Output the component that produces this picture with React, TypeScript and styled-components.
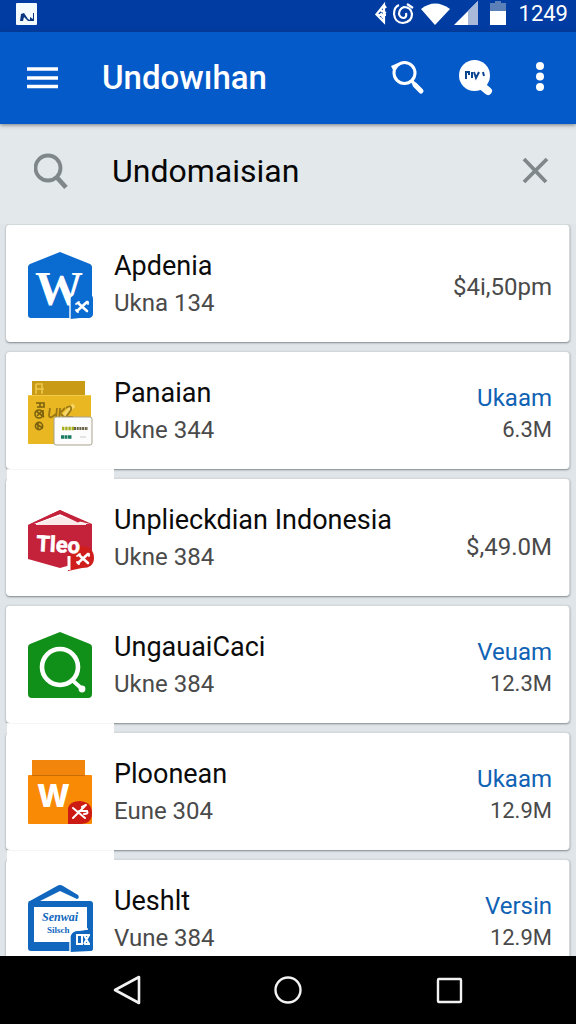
import React, { useState } from 'react';
import styled, { createGlobalStyle } from 'styled-components';

const GlobalStyle = createGlobalStyle`
  * { box-sizing: border-box; }
  body { margin: 0; background: #e1e7ea; font-family: Roboto, "Liberation Sans", sans-serif; }
  button, input { font: inherit; color: inherit; border: 0; padding: 0; margin: 0; background: none; }
  button { cursor: pointer; }
  svg { display: block; }
`;

const Screen = styled.div`
  display: flex;
  flex-direction: column;
  height: 100vh;
  overflow: hidden;
`;

const StatusBar = styled.div`
  flex: none;
  display: flex;
  align-items: center;
  justify-content: space-between;
  height: 32px;
  padding: 0 8px 4px 16px;
  background: #003ca2;
  color: #fff;
`;

const StatusIcons = styled.div`
  display: flex;
  align-items: center;
`;

const Clock = styled.span`
  margin-left: 12px;
  font-size: 22px;
  line-height: 28px;
`;

const AppBar = styled.header`
  position: relative;
  flex: none;
  display: flex;
  align-items: center;
  height: 92px;
  padding: 0 22px 0 26px;
  background: #045ac8;
  color: #fff;
  box-shadow: 0 1px 4px rgba(40, 50, 60, 0.6);
`;

const AppTitle = styled.h1`
  flex: 1;
  margin: 0 0 0 44px;
  font-size: 33px;
  font-weight: 500;
  line-height: 40px;
`;

const AppActions = styled.div`
  display: flex;
  align-items: center;
  gap: 32px;
`;

const SearchRow = styled.form`
  flex: none;
  display: flex;
  align-items: center;
  gap: 44px;
  height: 100px;
  padding: 0 26px 6px 34px;
  background: #e3e8ea;
`;

const SearchInput = styled.input`
  flex: 1;
  min-width: 0;
  height: 44px;
  font-size: 32px;
  color: #060606;
  outline: none;
`;

const List = styled.ul`
  flex: 1;
  min-height: 0;
  display: flex;
  flex-direction: column;
  gap: 9px;
  margin: 0;
  padding: 0 6px;
  overflow: hidden;
  list-style: none;
  background: #dfe5e8;
`;

const Card = styled.li<{ $joined?: boolean }>`
  position: relative;
  flex: none;
  display: flex;
  align-items: center;
  gap: 20px;
  min-height: 118px;
  padding: 0 17px 0 20px;
  background: #fff;
  border: 1px solid #d3d8da;
  border-width: 1px 1px 0 0;
  border-radius: 4px;
  box-shadow: 0 1px 2px rgba(50, 60, 66, 0.55);

  &::after {
    content: '';
    display: ${(p) => (p.$joined ? 'block' : 'none')};
    position: absolute;
    z-index: 1;
    left: 1px;
    top: 100%;
    width: 107px;
    height: 10px;
    background: #fff;
    border-top: 1px solid #f4f5f5;
  }
`;

const Details = styled.div`
  flex: 1;
  min-width: 0;
  padding-top: 2px;
`;

const Name = styled.h2`
  margin: 0;
  font-size: 27px;
  font-weight: 400;
  line-height: 36px;
  color: #0b0b0b;
  white-space: nowrap;
`;

const Note = styled.p`
  margin: 0;
  font-size: 24px;
  line-height: 38px;
  color: #4a4a4a;
`;

const Side = styled.div<{ $low?: boolean }>`
  display: flex;
  flex-direction: column;
  align-items: flex-end;
  padding-top: ${(p) => (p.$low ? 18 : 6)}px;
  line-height: 32px;
  color: #4a4a4a;
`;

const StoreLink = styled.a`
  font-size: 24px;
  color: #0f62b4;
  text-decoration: none;
`;

const Amount = styled.span<{ $large?: boolean }>`
  font-size: ${(p) => (p.$large ? 24 : 22)}px;
`;

const NavBar = styled.nav`
  flex: none;
  display: flex;
  justify-content: center;
  height: 68px;
  background: #000;
`;

const NavButton = styled.button`
  display: flex;
  align-items: center;
  justify-content: center;
  width: 28%;
`;

const Tools = ({ x, y }: { x: number; y: number }) => (
  <g transform={`translate(${x} ${y})`} stroke="#fff" fill="none" strokeLinecap="round">
    <path d="M-4 -3 L5 5" strokeWidth="2.6" />
    <path d="M5 -4 L-5 5" strokeWidth="2.6" />
    <path d="M-6 -2 L-3 -4 M-6 4 L-4 6 M6 -2 L6 -4" strokeWidth="1.8" />
  </g>
);

const BlueHouse = () => (
  <>
    <path d="M34 3 L64 15 Q66 16 66 18 V66 Q66 69 63 69 H5 Q2 69 2 66 V18 Q2 16 4 15 Z" fill="#0a6bd0" />
    <text x="9" y="56" fontFamily="Liberation Serif, serif" fontWeight="700" fontSize="48" fill="#fff">W</text>
    <path d="M44 49 L48 46 H64 Q67 46 67 50 V65 Q67 68 64 68 L44 70 Z" fill="#0a6bd0" />
    <path d="M44 48 V70" stroke="#fff" strokeWidth="1.4" />
    <Tools x={56} y={57} />
  </>
);

const YellowBox = () => (
  <>
    <rect x="6" y="5" width="53" height="16" fill="#c99a16" />
    <path d="M10 8 V18 M16 8 V18 M10 13 H18 M10 8 H17" stroke="#ecc84c" strokeWidth="1.6" />
    <rect x="2" y="19" width="63" height="49" rx="1" fill="#e9b722" />
    <path d="M2 19.5 H65" stroke="#f3cb4a" />
    <g fill="none" stroke="#7b6210" strokeWidth="1.6">
      <path d="M10 27 H18 V31 H11 M14 27 V31" />
      <circle cx="13" cy="38" r="4" />
      <path d="M10 35 L18 41 M17 34 V41 M11 40 L16 35" />
      <circle cx="13" cy="50" r="3.6" />
      <path d="M10 48 L17 52 M12 47 V53" />
    </g>
    <path d="M37 40 L48 29" stroke="#f6d566" strokeWidth="4" />
    <path d="M24 32 L23 39 Q23 42 26 41 L30 38 M31 32 L30 42 M34 32 L33 46 M34 37 L39 32 M35 38 L39 42 M40 32 Q46 28 45 34 L40 41 H47" fill="none" stroke="#9a7713" strokeWidth="1.8" />
    <rect x="28" y="41" width="38" height="28" rx="2" fill="#fbfcfb" stroke="#a9a48f" />
    <path d="M36 52.5 H48" stroke="#a6ad1c" strokeWidth="3.4" strokeDasharray="2.4 0.8" />
    <path d="M48 52.5 H62" stroke="#686044" strokeWidth="3" strokeDasharray="2 0.7" />
    <path d="M35 61 H46" stroke="#187b62" strokeWidth="3.4" strokeDasharray="3 0.5" />
    <path d="M54 61 H60" stroke="#e2e5e3" strokeWidth="2" />
  </>
);

const RedCrate = () => (
  <>
    <path d="M34 7 L66 21 V56 L34 65 L2 56 V22 Z" fill="#c4213a" />
    <path d="M34 11 L54 18.5 L64 21 H7 Z" fill="#fff" />
    <path d="M10 21 L34 13 L55 20 H60 V22 H10 Z" fill="#fbe9ea" />
    <path d="M34 7 L55 18 L52 19.5 L34 11 L9 20.5 L2 22 Z" fill="#c4213a" />
    <path d="M42 68 V52 Q46 43 56 43 Q68 44 68 55 Q68 65 56 65 Z" fill="#cf1d1b" />
    <text x="10" y="48" fontFamily="Roboto, sans-serif" fontWeight="700" fontSize="22" fill="#fff" stroke="#fff" strokeWidth="0.6" transform="rotate(3 10 48)">Tleo</text>
    <path d="M43 53 V67" stroke="#fff" strokeWidth="3" />
    <Tools x={57} y={55} />
  </>
);

const GreenHouse = () => (
  <>
    <path d="M34 2 L64 14 Q66 15 66 17 V64 Q66 68 62 68 H6 Q2 68 2 64 V17 Q2 15 4 14 Z" fill="#109018" />
    <circle cx="34" cy="37" r="18" fill="none" stroke="#fff" strokeWidth="4.6" />
    <path d="M45 49 L55 58" stroke="#fff" strokeWidth="4" />
    <circle cx="56" cy="59" r="3.4" fill="#fff" />
  </>
);

const OrangeBox = () => (
  <>
    <rect x="6" y="3" width="53" height="16" fill="#f2850b" />
    <rect x="2" y="18" width="64" height="49" rx="1" fill="#f98a06" />
    <path d="M6 18.5 H59" stroke="#c96c08" />
    <text x="11" y="50" fontFamily="Inter, Roboto, sans-serif" fontWeight="800" fontSize="31" fill="#fff">W</text>
    <path d="M42 51 Q44 44 54 44 Q66 45 66 56 Q66 67 54 67 H42 Z" fill="#cc1b14" />
    <g fill="none" stroke="#fff" strokeWidth="2" strokeLinecap="round">
      <path d="M47 51 L59 61 M47 61 L59 49 M53 54 H61 Q63 57 58 57 M56 50 L60 48" />
    </g>
  </>
);

const BlueFrame = () => (
  <>
    <path d="M2 18 L31 2 Q34 0 37 2 L52 11 Q54 14 51 15 L34 7 L12 18 Z" fill="#1166bd" />
    <rect x="2" y="17" width="65" height="50" rx="3" fill="#1166bd" />
    <rect x="8" y="23" width="53" height="35" fill="#fff" />
    <text x="16" y="37" fontFamily="Liberation Serif, serif" fontWeight="700" fontStyle="italic" fontSize="12" fill="#1166bd">Senwai</text>
    <text x="21" y="49" fontFamily="Liberation Serif, serif" fontWeight="700" fontSize="9" fill="#1166bd">Silsch</text>
    <path d="M44 68 V52 Q46 47 52 47 L67 45 V64 Q67 67 64 67 Z" fill="#1166bd" />
    <path d="M44 69 V52 Q46 46 52 46 L62 45" fill="none" stroke="#fff" strokeWidth="1.4" />
    <path d="M51 51 V60 H56 V51 Z M58 51 L63 60 M63 51 L58 60 M57 51 H64 M58 60 H64" fill="none" stroke="#fff" strokeWidth="2" />
  </>
);

type Item = {
  name: string;
  note: string;
  store?: string;
  amount: string;
  icon: React.FC;
  joined?: boolean;
  low?: boolean;
};

const items: Item[] = [
  { name: 'Apdenia', note: 'Ukna 134', amount: '$4i,50pm', icon: BlueHouse },
  { name: 'Panaian', note: 'Ukne 344', store: 'Ukaam', amount: '6.3M', icon: YellowBox, joined: true },
  { name: 'Unplieckdian Indonesia', note: 'Ukne 384', amount: '$,49.0M', icon: RedCrate, low: true },
  { name: 'UngauaiCaci', note: 'Ukne 384', store: 'Veuam', amount: '12.3M', icon: GreenHouse, joined: true },
  { name: 'Ploonean', note: 'Eune 304', store: 'Ukaam', amount: '12.9M', icon: OrangeBox, joined: true },
  { name: 'Ueshlt', note: 'Vune 384', store: 'Versin', amount: '12.9M', icon: BlueFrame },
];

export default function App() {
  const [query, setQuery] = useState('Undomaisian');
  return (
    <>
      <GlobalStyle />
      <Screen>
        <StatusBar>
          <svg width="22" height="24" viewBox="0 0 22 24">
            <rect x="0" y="1" width="21" height="22" rx="1" fill="#f4fbff" />
            <path d="M4 19 L5 12 L8 11 L12 17 L14 18 L14 15 L17 17 L17 11 L18 11 V19 L12 19 L8 15 L7 19 Z" fill="#0a3680" />
          </svg>
          <StatusIcons>
            <svg width="132" height="28" viewBox="0 0 132 28" fill="none" stroke="#fff">
              <path d="M1 15 L9 5 V22 L2 15 H11 M5 10 L11 13 M9 5 L11 8 M6 13 L8 18" strokeWidth="2.2" />
              <path d="M24 5 Q19 7 19 14 Q20 23 28 23 Q37 22 37 14 Q36 7 29 7 Q24 9 24 14 Q25 18 29 18 Q32 17 31 13 M32 4 L38 8" strokeWidth="2.2" />
              <path d="M46 9 Q60 -2 75 9 L60 25 Z" fill="#fff" stroke="none" />
              <path d="M103 1 V25 H79 Z" fill="#fff" stroke="none" />
              <path d="M103 1 V25 H93 V11 Z" fill="#a9b9da" stroke="none" />
              <path d="M120 1 H126 V3 H131 V12 H115 V3 H120 Z" fill="#5b80b8" stroke="none" />
              <rect x="115" y="11" width="16" height="14" fill="#fff" stroke="none" />
            </svg>
            <Clock>1249</Clock>
          </StatusIcons>
        </StatusBar>

        <AppBar>
          <button type="button" aria-label="Menu">
            <svg width="32" height="36" viewBox="0 0 32 36" stroke="#fff" strokeWidth="3.6">
              <path d="M1 9 H32 M1 18 H32 M1 26.5 H32" />
            </svg>
          </button>
          <AppTitle>Undowıhan</AppTitle>
          <AppActions>
            <button type="button" aria-label="Search">
              <svg width="36" height="36" viewBox="0 0 36 36" fill="none" stroke="#fff">
                <circle cx="14.500" cy="13" r="10.500" strokeWidth="3" />
                <path d="M1 6 L8 3 L4 12 Z" fill="#fff" stroke="none" />
                <path d="M22 21 L25 25" strokeWidth="3.4" />
                <path d="M25 25 L31 31" strokeWidth="5" strokeLinecap="round" />
              </svg>
            </button>
            <button type="button" aria-label="Messages">
              <svg width="36" height="36" viewBox="0 0 36 36">
                <circle cx="16.500" cy="15.500" r="15.500" fill="#fff" />
                <path d="M24 26 L30 31" stroke="#fff" strokeWidth="8" strokeLinecap="round" />
                <path d="M8 19 V12 H11 V15 M14 12 V18 M16 12 L18 18 L21 12 M25 12 L26 16" fill="none" stroke="#0b458f" strokeWidth="2" />
              </svg>
            </button>
            <button type="button" aria-label="More options">
              <svg width="28" height="36" viewBox="0 0 28 36" fill="#fff">
                <circle cx="14" cy="6" r="4" />
                <circle cx="14" cy="16.500" r="4" />
                <circle cx="14" cy="27" r="4" />
              </svg>
            </button>
          </AppActions>
        </AppBar>

        <SearchRow role="search" onSubmit={(e) => e.preventDefault()}>
          <svg width="34" height="38" viewBox="0 0 34 38" fill="none" stroke="#80878a">
            <circle cx="14" cy="16" r="12.500" strokeWidth="3.8" />
            <path d="M22.500 25 L32 35.500" strokeWidth="4.800" />
          </svg>
          <SearchInput
            type="text"
            aria-label="Search apps"
            value={query}
            onChange={(e) => setQuery(e.target.value)}
          />
          <button type="button" aria-label="Clear search" onClick={() => setQuery('')}>
            <svg width="28" height="28" viewBox="0 0 28 28" stroke="#80878a" strokeWidth="3.8">
              <path d="M2 2 L24 25 M25 2 L2 25" />
            </svg>
          </button>
        </SearchRow>

        <List>
          {items.map(({ name, note, store, amount, icon: Icon, joined, low }) => (
            <Card key={name} $joined={joined}>
              <svg width="68" height="70" viewBox="0 0 68 70" aria-hidden="true">
                <Icon />
              </svg>
              <Details>
                <Name>{name}</Name>
                <Note>{note}</Note>
              </Details>
              <Side $low={low}>
                {store && <StoreLink href="#">{store}</StoreLink>}
                <Amount $large={!store}>{amount}</Amount>
              </Side>
            </Card>
          ))}
        </List>

        <NavBar>
          <NavButton type="button" aria-label="Back">
            <svg width="28" height="32" viewBox="0 0 28 32" fill="none" stroke="#f2f2f2" strokeWidth="2.6" strokeLinejoin="round">
              <path d="M2 16 L26 3 V29 Z" />
            </svg>
          </NavButton>
          <NavButton type="button" aria-label="Home">
            <svg width="30" height="30" viewBox="0 0 30 30" fill="none" stroke="#f2f2f2" strokeWidth="2.4">
              <circle cx="15" cy="15" r="12.500" />
            </svg>
          </NavButton>
          <NavButton type="button" aria-label="Recent apps">
            <svg width="28" height="28" viewBox="0 0 28 28" fill="none" stroke="#f2f2f2" strokeWidth="2.4">
              <rect x="3" y="3" width="23" height="23" rx="1" />
            </svg>
          </NavButton>
        </NavBar>
      </Screen>
    </>
  );
}
